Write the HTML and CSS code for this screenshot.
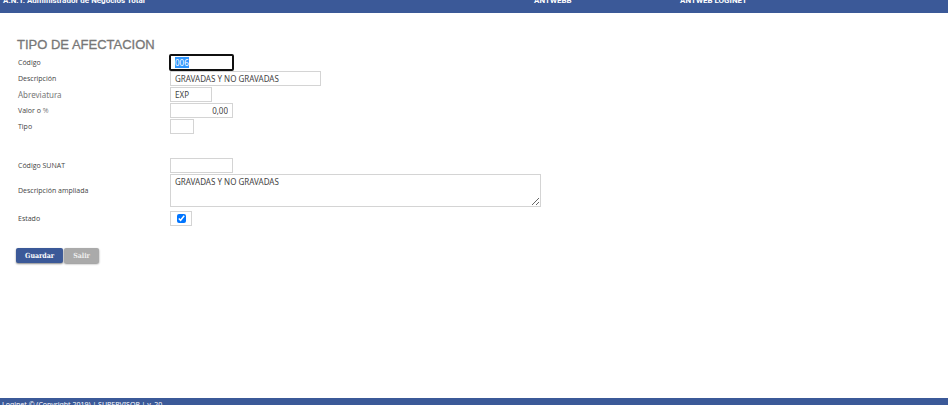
FILE: index.html
```html
<!DOCTYPE html>
<html lang="es">
<head>
<meta charset="utf-8">
<title>Tipo de afectacion</title>
<link rel="stylesheet" href="styles.css">
</head>
<body>
<header class="topbar">
  <span>A.N.T. Administrador de Negocios Total</span>
  <span>ANTWEBB</span>
  <span>ANTWEB LOGINET</span>
</header>
<main class="content">
  <h1 class="title">TIPO DE AFECTACION</h1>
  <form class="form">
    <div class="row"><label for="codigo">Código</label><input class="field medium" id="codigo" type="text" value="006"></div>
    <div class="row"><label for="descripcion">Descripción</label><input class="field wide" id="descripcion" type="text" value="GRAVADAS Y NO GRAVADAS"></div>
    <div class="row"><label class="alt" for="abreviatura">Abreviatura</label><input class="field small" id="abreviatura" type="text" value="EXP"></div>
    <div class="row"><label for="valor">Valor o <span class="unit">%</span></label><input class="field medium number" id="valor" type="text" value="0,00"></div>
    <div class="row"><label for="tipo">Tipo</label><input class="field tiny" id="tipo" type="text"></div>
    <div class="row spaced"><label for="sunat">Código SUNAT</label><input class="field medium" id="sunat" type="text"></div>
    <div class="row"><label for="ampliada">Descripción ampliada</label><textarea class="field area" id="ampliada">GRAVADAS Y NO GRAVADAS</textarea></div>
    <div class="row status"><label for="estado">Estado</label><span class="field check"><input id="estado" type="checkbox" checked></span></div>
    <div class="actions">
      <button class="button primary" type="button">Guardar</button>
      <button class="button" type="button">Salir</button>
    </div>
  </form>
</main>
<footer class="footer">Loginet © (Copyright 2019) | SUPERVISOR | v. 20</footer>
<script src="script.js"></script>
</body>
</html>
```
FILE: styles.css
```css
* {
  box-sizing: border-box;
}

body {
  margin: 0;
  height: 100vh;
  overflow: hidden;
  display: flex;
  flex-direction: column;
  background: #fff;
  color: #444;
  font-family: "Open Sans", sans-serif;
  font-size: 7px;
}

.topbar {
  flex: none;
  display: grid;
  grid-template-columns: 531fr 146fr 268fr;
  margin-top: -5px;
  padding: 0 0 6px 3px;
  background: #3b5998;
  color: #fff;
  font-family: Roboto, sans-serif;
  font-size: 8px;
  font-weight: 700;
  line-height: 12px;
}

.content {
  flex: 1;
  padding: 24px 16px 0;
}

.title {
  margin: 0 0 2px 1px;
  color: #777;
  font-family: "Liberation Sans", Arial, sans-serif;
  font-size: 13px;
  font-weight: 400;
  line-height: 16px;
  -webkit-text-stroke: 0.3px #777;
}

.form {
  display: flex;
  flex-direction: column;
  gap: 1px;
}

.row {
  display: grid;
  grid-template-columns: 152px 1fr;
  align-items: center;
  padding-left: 2px;
}

.row.spaced {
  margin-top: 23px;
}

.row.status {
  margin-top: 3px;
}

.alt {
  color: #777;
  font-family: "Noto Sans", sans-serif;
  font-size: 8px;
}

.unit {
  color: #777;
}

.field {
  height: 15px;
  margin: 0;
  padding: 0 4px;
  border: 1px solid #d4d4d4;
  background: #fff;
  color: #444;
  font-family: "Noto Sans", sans-serif;
  font-size: 8px;
  line-height: 14px;
}

.field:focus {
  outline: 2px solid #101010;
  outline-offset: -1px;
  border-radius: 1px;
}

.field::selection {
  background: #3297fd;
  color: #fff;
}

.tiny {
  width: 24px;
}

.small {
  width: 42px;
}

.medium {
  width: 63px;
}

.wide {
  width: 151px;
}

.number {
  text-align: right;
}

.area {
  display: block;
  width: 371px;
  height: 33px;
  resize: both;
}

.check {
  display: flex;
  align-items: center;
  width: 22px;
  padding: 0 6px;
}

.check input {
  width: 9px;
  height: 9px;
  margin: 0;
  accent-color: #0075ff;
}

.actions {
  display: flex;
  gap: 1px;
  margin-top: 21px;
}

.button {
  height: 15px;
  padding: 0 9px;
  border: 0;
  border-radius: 2px;
  background: #aaa;
  box-shadow: 0 1px 2px #888;
  color: #eee;
  font-family: "DejaVu Serif Condensed", "DejaVu Serif", serif;
  font-size: 7px;
  font-weight: 700;
  line-height: 15px;
}

.button.primary {
  background: #3b5998;
  color: #fff;
}

.footer {
  flex: none;
  height: 7px;
  padding: 3px 2px 0;
  overflow: hidden;
  background: #3b5998;
  color: #fff;
  font-family: "Noto Sans", sans-serif;
  font-size: 7px;
  line-height: 8px;
}
```
FILE: script.js
```js
const code = document.getElementById("codigo");
code.focus();
code.select();
```
